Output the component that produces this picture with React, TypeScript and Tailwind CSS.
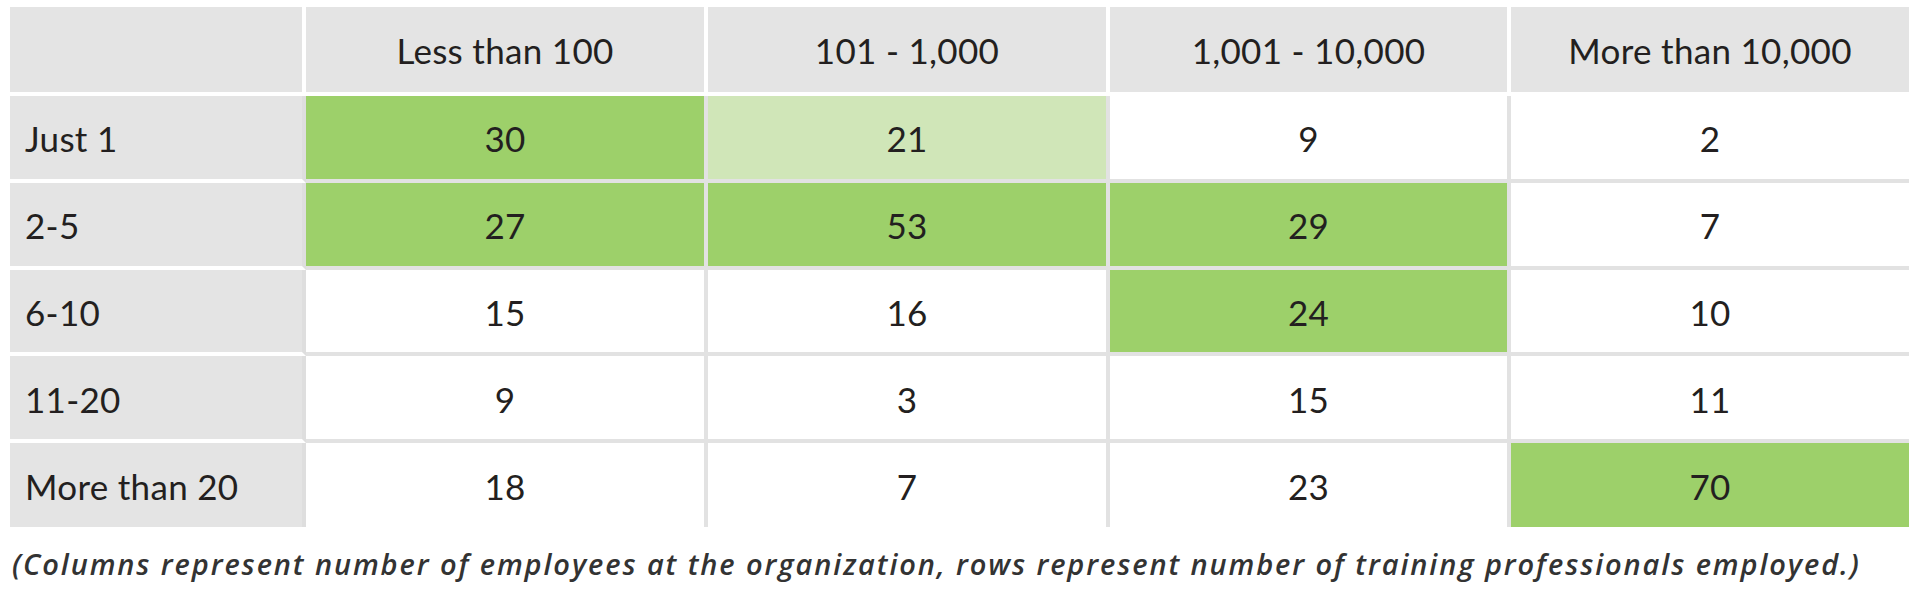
import React from "react";

type Cell = { v: string; bg: "g" | "l" | "w" };

const headers = ["Less than 100", "101 - 1,000", "1,001 - 10,000", "More than 10,000"];

const rows: { label: string; cells: Cell[] }[] = [
  { label: "Just 1", cells: [{ v: "30", bg: "g" }, { v: "21", bg: "l" }, { v: "9", bg: "w" }, { v: "2", bg: "w" }] },
  { label: "2-5", cells: [{ v: "27", bg: "g" }, { v: "53", bg: "g" }, { v: "29", bg: "g" }, { v: "7", bg: "w" }] },
  { label: "6-10", cells: [{ v: "15", bg: "w" }, { v: "16", bg: "w" }, { v: "24", bg: "g" }, { v: "10", bg: "w" }] },
  { label: "11-20", cells: [{ v: "9", bg: "w" }, { v: "3", bg: "w" }, { v: "15", bg: "w" }, { v: "11", bg: "w" }] },
  { label: "More than 20", cells: [{ v: "18", bg: "w" }, { v: "7", bg: "w" }, { v: "23", bg: "w" }, { v: "70", bg: "g" }] },
];

const bgClass: Record<Cell["bg"], string> = {
  g: "bg-[#9dd06a]",
  l: "bg-[#d0e6b8]",
  w: "bg-white",
};

export default function App() {
  return (
    <div className="w-[1920px] h-[600px] bg-white overflow-hidden text-[#231f20]" style={{ fontFamily: "Lato, 'Noto Sans', sans-serif" }}>
      <div className="ml-[10px] mt-[7px] w-[1899px] grid grid-cols-[296px_402px_402px_401px_398px] text-[35px] tracking-[0.3px] leading-none">
        {/* header row */}
        <div className="h-[89px] bg-[#e4e4e4] border-r-4 border-b-4 border-white" />
        {headers.map((h, i) => (
          <div
            key={h}
            className={
              "h-[89px] bg-[#e4e4e4] border-b-4 border-white flex items-center justify-center " +
              (i < headers.length - 1 ? "border-r-4" : "")
            }
          >
            <span className="mt-[2px]">{h}</span>
          </div>
        ))}
        {rows.map((r, ri) => {
          const last = ri === rows.length - 1;
          return (
            <React.Fragment key={r.label}>
              <div
                className={
                  "bg-[#e4e4e4] border-r-4 border-r-[#dedede] border-b-white flex items-center pl-[15px] " +
                  (last ? "h-[84px]" : "h-[86.75px] border-b-4")
                }
              >
                <span className="mt-[3px]">{r.label}</span>
              </div>
              {r.cells.map((c, ci) => (
                <div
                  key={ci}
                  className={
                    bgClass[c.bg] +
                    " border-[#e2e2e2] flex items-center justify-center " +
                    (last ? "h-[84px] " : "h-[86.75px] border-b-4 ") +
                    (ci < r.cells.length - 1 ? "border-r-4" : "")
                  }
                >
                  <span className="mt-[3px]">{c.v}</span>
                </div>
              ))}
            </React.Fragment>
          );
        })}
      </div>
      <p
        className="mt-[17px] ml-[12px] text-[29px] tracking-[1.9px] leading-[40px] italic font-semibold text-[#333333] whitespace-nowrap"
        style={{ fontFamily: "'Open Sans', sans-serif" }}
      >
        (Columns represent number of employees at the organization, rows represent number of training professionals employed.)
      </p>
    </div>
  );
}
